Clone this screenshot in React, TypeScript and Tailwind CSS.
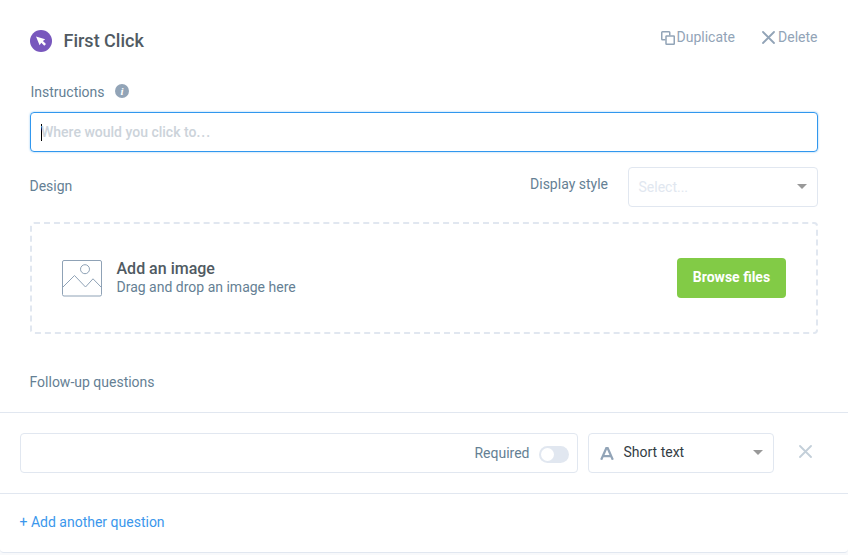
import React from "react";

function Caret() {
  return (
    <svg width="10" height="5" viewBox="0 0 10 5" className="block shrink-0">
      <path d="M0 0H10L5 5Z" fill="#999999" />
    </svg>
  );
}

function Cross({ size, color, width }: { size: number; color: string; width: number }) {
  return (
    <svg width={size} height={size} viewBox="0 0 13 13" className="block shrink-0" fill="none" stroke={color} strokeWidth={width} strokeLinecap="round">
      <path d="M1 1L12 12M12 1L1 12" />
    </svg>
  );
}

function ClickBadge() {
  return (
    <svg width="22" height="22" viewBox="0 0 22 22" className="block shrink-0">
      <circle cx="11" cy="11" r="11" fill="#7857bd" />
      <path d="M6 6.5L15.2 9.2L12.9 10.9L16 14L14.3 15.7L11.3 12.7L9.6 15.2Z" fill="#fff" />
    </svg>
  );
}

function Header() {
  return (
    <header className="flex h-[52px] items-end justify-between pl-[30px] pr-[30.5px]">
      <div className="flex items-center gap-[11.5px]">
        <ClickBadge />
        <h1 className="h-[22px] text-[18px] leading-[22px] font-medium text-[#505a62]">First Click</h1>
      </div>
      <div className="mb-[5px] flex items-center text-[14px] leading-[20px] text-[#92a4b7]">
        <button className="flex items-center gap-[2px]">
          <svg width="14" height="14" viewBox="0 0 14 14" fill="none" stroke="#92a4b7" strokeWidth="1.5" className="mt-[1px] block">
            <path d="M4.5 8.75H1.5Q.75 8.75 .75 8V1.5Q.75 .75 1.5 .75H8Q8.75 .75 8.75 1.5V4.5" />
            <rect x="5" y="5" width="8.25" height="8.25" rx=".6" />
          </svg>
          <span>Duplicate</span>
        </button>
        <button className="ml-[27px] flex items-center gap-[3px]">
          <span className="mt-[1px]"><Cross size={13} color="#92a4b7" width={1.8} /></span>
          <span>Delete</span>
        </button>
      </div>
    </header>
  );
}

function Dropzone() {
  return (
    <section className="mx-[30px] mt-[15px] flex h-[112px] items-center rounded-[4px] border-2 border-dashed border-[#e1e7f0] px-[30px]">
      <svg width="40" height="37" viewBox="0 0 40 37" fill="none" stroke="#8fa2b6" className="block shrink-0">
        <rect x=".5" y=".5" width="39" height="35.5" rx="1.5" />
        <circle cx="23" cy="9.2" r="4.5" />
        <path d="M.5 27.5L12.5 15.5L23.5 27L31 18.8L39.5 27.5" />
      </svg>
      <div className="ml-[14.5px] flex-1">
        <p className="text-[16px] leading-[19px] font-medium text-[#505a62]">Add an image</p>
        <p className="text-[14px] leading-[19px] text-[#657f94]">Drag and drop an image here</p>
      </div>
      <button className="h-[40px] w-[109px] rounded-[4px] bg-[#82cb46] pb-[1px] text-[14px] font-bold text-white">Browse files</button>
    </section>
  );
}

function Question() {
  return (
    <section className="flex h-[82px] items-center border-y border-[#e1e7f0] pl-[20px]">
      <div className="flex h-[40px] w-[558px] items-center justify-end rounded-[4px] border border-[#e1e7f0] pr-[8px]">
        <span className="text-[14px] text-[#657f94]">Required</span>
        <span className="mt-[2px] ml-[9.5px] flex h-[17px] w-[30px] items-center rounded-full bg-[#e1e7f0] pl-[2px]">
          <span className="h-[13px] w-[13px] rounded-full bg-white" />
        </span>
      </div>
      <div className="ml-[10px] flex h-[40px] w-[186px] items-center rounded-[4px] border border-[#e1e7f0] pr-[10px] pb-[1px] pl-[11px]">
        <svg width="14" height="13" viewBox="0 0 14 13" fill="none" stroke="#92a4b7" strokeWidth="2.2" className="mt-[2px] block">
          <path d="M1.2 12.8L6.3 1.2H7.7L12.8 12.8M3.2 9.2H10.8" />
        </svg>
        <span className="ml-[9.5px] flex-1 text-[14px] text-[#333c44]">Short text</span>
        <Caret />
      </div>
      <button className="-mt-[3px] ml-[25px]">
        <Cross size={13} color="#c3cfd9" width={1.8} />
      </button>
    </section>
  );
}

export default function App() {
  return (
    <div className="h-[555px] w-[848px] overflow-hidden bg-[#f8f9fb] font-[Roboto,sans-serif] text-[#657f94]">
      <main className="h-[553px] rounded-b-[4px] border-b border-[#e1e7f0] bg-white">
        <Header />
        <div className="mt-[30px] flex h-[20px] items-center pl-[30.5px]">
          <label className="text-[14px] leading-[20px]">Instructions</label>
          <span className="-mt-[2px] ml-[10.5px] flex h-[14px] w-[14px] items-center justify-center rounded-full bg-[#92a4b7] font-['Liberation_Serif',serif] text-[11px] leading-[14px] font-bold text-white italic">i</span>
        </div>
        <div className="mx-[30px] mt-[10px] flex h-[40px] items-center rounded-[4px] border border-[#3197ee] pl-[10px] shadow-[0_0_2px_rgba(49,151,238,0.6)]">
          <span className="-mr-px h-[17px] w-px bg-black" />
          <span className="text-[14px] font-medium text-[#ccd3da]">Where would you click to<span className="tracking-[1px]">...</span></span>
        </div>
        <div className="mt-[15px] flex h-[40px] items-center pr-[30px] pl-[29.5px] text-[14px] leading-[20px]">
          <span className="mb-[2px] flex-1">Design</span>
          <span className="mb-[6px]">Display style</span>
          <div className="ml-[20px] flex h-[40px] w-[190px] items-center justify-between rounded-[4px] border border-[#e1e7f0] pr-[10px] pb-[1px] pl-[9.5px] text-[#e1e7f0]">
            <span>Select...</span>
            <Caret />
          </div>
        </div>
        <Dropzone />
        <h2 className="mt-[38px] mb-[20px] pl-[29.5px] text-[14px] leading-[20px]">Follow-up questions</h2>
        <Question />
        <button className="mt-[18px] ml-[19.5px] block text-[14px] leading-[20px] text-[#3b97ec]">+ Add another question</button>
      </main>
    </div>
  );
}
